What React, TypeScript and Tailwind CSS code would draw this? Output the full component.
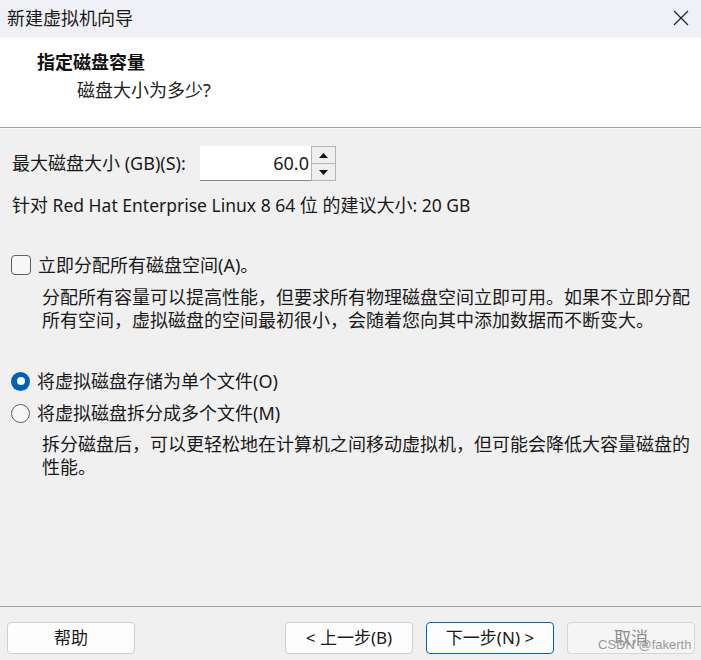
import React from "react";

const font = { fontFamily: '"Noto Sans", "Noto Sans CJK SC", sans-serif' };

function Btn({ children, variant }: { children: React.ReactNode; variant?: "primary" | "disabled" }) {
  const base = "h-[32px] w-[128px] rounded-[4px] flex items-center justify-center text-[17px]";
  if (variant === "primary")
    return <div className={base + " border border-[#0067c0] bg-[#fdfdfd] text-[#1a1a1a]"}>{children}</div>;
  if (variant === "disabled")
    return <div className={base + " border border-[#d6d6d6] bg-[#f5f5f5] text-[#8c8c8c]"}>{children}</div>;
  return <div className={base + " border border-[#d0d0d0] bg-[#fdfdfd] text-[#1a1a1a]"}>{children}</div>;
}

export default function App() {
  return (
    <div className="w-[701px] h-[660px] bg-[#f0f0f0] flex flex-col relative overflow-hidden text-[#1a1a1a]" style={font}>
      {/* Title bar */}
      <div className="h-[38px] bg-[#eff1f6] flex items-center justify-between pl-[7px] pr-[12px] shrink-0">
        <span className="text-[18px] leading-none text-[#1a1a1a] mb-[2px]">新建虚拟机向导</span>
        <svg width="16" height="16" viewBox="0 0 16 16" className="mb-[3px]">
          <path d="M1 1 L15 15 M15 1 L1 15" stroke="#222" strokeWidth="1.2" fill="none" />
        </svg>
      </div>
      {/* Header */}
      <div className="h-[89px] bg-white shrink-0 pt-[12px] pl-[37px]">
        <div className="text-[18px] leading-[24px] font-bold text-[#111]">指定磁盘容量</div>
        <div className="text-[18px] leading-[24px] mt-[4px] pl-[40px] text-[#222]">磁盘大小为多少?</div>
      </div>
      <div className="h-px bg-[#a0a0a0] shrink-0" />
      <div className="h-px bg-[#f8f8f8] shrink-0" />
      {/* Body */}
      <div className="flex-1 flex flex-col pt-[17px]">
        <div className="flex items-center pl-[12px] h-[35px]">
          <span className="text-[18px] w-[188px]">最大磁盘大小 (GB)(S):</span>
          <div className="h-[35px] w-[111px] bg-white border-b border-[#8a8a8a] flex items-center justify-end pr-[2px] text-[18px]">
            60.0
          </div>
          <div className="h-[35px] w-[25px] flex flex-col border border-[#b5b5b5] bg-[#e6e6e6]">
            <div className="flex-1 flex items-center justify-center border-b border-[#b5b5b5] bg-[#efefef]">
              <svg width="9" height="5" viewBox="0 0 9 5"><path d="M4.5 0 L9 5 L0 5 Z" fill="#111" /></svg>
            </div>
            <div className="flex-1 flex items-center justify-center bg-[#efefef]">
              <svg width="9" height="5" viewBox="0 0 9 5"><path d="M0 0 L9 0 L4.5 5 Z" fill="#111" /></svg>
            </div>
          </div>
        </div>
        <div className="pl-[12px] mt-[12px] text-[18px] leading-[24px]">
          针对<span className="text-[17.5px]"> Red Hat Enterprise Linux 8 64 </span>位 的建议大小<span className="text-[17.5px]">: 20 GB</span>
        </div>
        <div className="flex items-center pl-[11px] mt-[36px] h-[24px]">
          <div className="w-[20px] h-[20px] rounded-[4px] border border-[#5f5f5f] bg-[#f7f7f7]" />
          <span className="ml-[7px] text-[18px]">立即分配所有磁盘空间(A)。</span>
        </div>
        <div className="pl-[42px] pr-[8px] mt-[9px] text-[18px] leading-[23px] text-[#1a1a1a]">
          分配所有容量可以提高性能，但要求所有物理磁盘空间立即可用。如果不立即分配所有空间，虚拟磁盘的空间最初很小，会随着您向其中添加数据而不断变大。
        </div>
        <div className="flex items-center pl-[11px] mt-[37px] h-[24px]">
          <div className="w-[19px] h-[19px] rounded-full bg-[#005fb8] flex items-center justify-center">
            <div className="w-[8px] h-[8px] rounded-full bg-white" />
          </div>
          <span className="ml-[7px] text-[18px]">将虚拟磁盘存储为单个文件(O)</span>
        </div>
        <div className="flex items-center pl-[11px] mt-[8px] h-[24px]">
          <div className="w-[19px] h-[19px] rounded-full border border-[#5f5f5f] bg-[#f7f7f7]" />
          <span className="ml-[7px] text-[18px]">将虚拟磁盘拆分成多个文件(M)</span>
        </div>
        <div className="pl-[42px] pr-[8px] mt-[8px] text-[18px] leading-[23px] text-[#1a1a1a]">
          拆分磁盘后，可以更轻松地在计算机之间移动虚拟机，但可能会降低大容量磁盘的性能。
        </div>
      </div>
      {/* Footer */}
      <div className="h-px bg-[#a0a0a0] shrink-0" />
      <div className="h-[53px] shrink-0 flex items-start pt-[15px] pl-[7px]">
        <Btn>帮助</Btn>
        <div className="ml-[150px] flex gap-[13px]">
          <Btn>&lt; 上一步(B)</Btn>
          <Btn variant="primary">下一步(N) &gt;</Btn>
          <Btn variant="disabled">取消</Btn>
        </div>
      </div>
      <div className="absolute left-[598px] top-[638px] text-[13px] text-[#9a9a9a] leading-none" style={{ fontFamily: '"Liberation Sans", Arial, sans-serif' }}>
        CSDN @fakerth
      </div>
    </div>
  );
}
